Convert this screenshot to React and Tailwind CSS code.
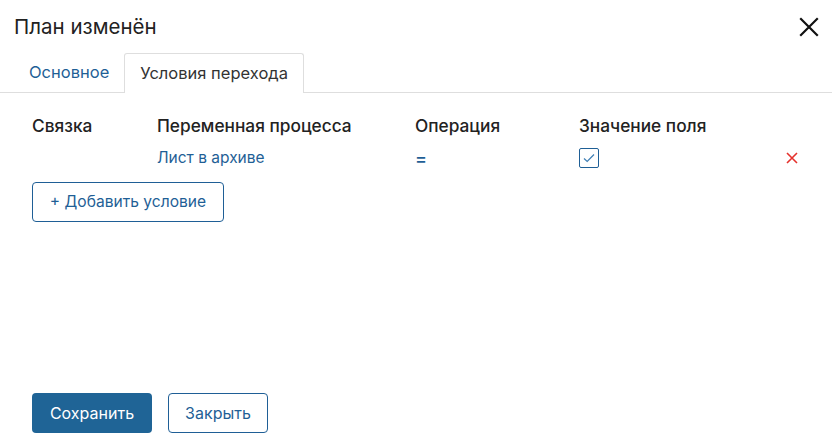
import React from "react";

function CloseIcon() {
  return (
    <svg width="20" height="20" viewBox="0 0 20 20" fill="none">
      <path d="M2 2L18 18M18 2L2 18" stroke="#111" strokeWidth="2.2" strokeLinecap="square" />
    </svg>
  );
}

function Checkbox() {
  return (
    <div className="w-[20px] h-[20px] border-[1.5px] border-[#1f5f96] rounded-[2px] flex items-center justify-center bg-white">
      <svg width="14" height="14" viewBox="0 0 14 14" fill="none">
        <path d="M2 7.5L5.2 10.5L12 3.5" stroke="#3f7fb5" strokeWidth="1.2" />
      </svg>
    </div>
  );
}

export default function App() {
  return (
    <div className="w-[832px] h-[440px] bg-white flex flex-col font-['Inter',sans-serif] text-[16px] text-[#222]">
      <div className="flex items-center justify-between pl-[14px] pr-[13px] pt-[13px] h-[53px] pb-[12px]">
        <h1 className="text-[20.5px] text-[#222] font-normal">План изменён</h1>
        <button className="w-[20px] h-[20px] flex items-center justify-center">
          <CloseIcon />
        </button>
      </div>

      <div className="flex pl-[14px] h-[40px] border-b border-[#dedede] text-[16.5px]">
        <div className="px-[15px] flex items-center text-[#1f5f96]">Основное</div>
        <div className="px-[15px] flex items-center text-[#333] border border-b-0 border-[#dedede] rounded-t-[3px] bg-white -mb-px">
          Условия перехода
        </div>
      </div>

      <div className="px-[32px] pt-[20px]">
        <div className="grid grid-cols-[125px_258px_164px_1fr_14px] items-center">
          <div className="h-[24px] font-medium text-[17.3px] text-[#222]">Связка</div>
          <div className="h-[24px] font-medium text-[17.3px] text-[#222]">Переменная процесса</div>
          <div className="h-[24px] font-medium text-[17.3px] text-[#222]">Операция</div>
          <div className="h-[24px] font-medium text-[17.3px] text-[#222]">Значение поля</div>
          <div />
          <div className="h-[42px]" />
          <div className="h-[42px] flex items-center text-[15.5px] text-[#1f5f96]">Лист в архиве</div>
          <div className="h-[42px] flex items-center text-[18px] font-medium text-[#1f5f96]">=</div>
          <div className="h-[42px] flex items-center">
            <Checkbox />
          </div>
          <div className="h-[42px] flex items-center">
            <svg width="12" height="12" viewBox="0 0 12 12" fill="none">
              <path d="M1 1L11 11M11 1L1 11" stroke="#e5322d" strokeWidth="1.6" />
            </svg>
          </div>
        </div>
        <button className="mt-[3px] w-[192px] h-[40px] border border-[#1f5f96] rounded-[4px] text-[15.6px] text-[#1f5f96] flex items-center justify-center">
          + Добавить условие
        </button>
      </div>

      <div className="mt-auto flex gap-[16px] px-[32px] pb-[7px]">
        <button className="w-[120px] h-[40px] bg-[#1f6496] text-white rounded-[4px]">Сохранить</button>
        <button className="w-[100px] h-[40px] border border-[#1f5f96] text-[#1f5f96] rounded-[4px]">Закрыть</button>
      </div>
    </div>
  );
}
